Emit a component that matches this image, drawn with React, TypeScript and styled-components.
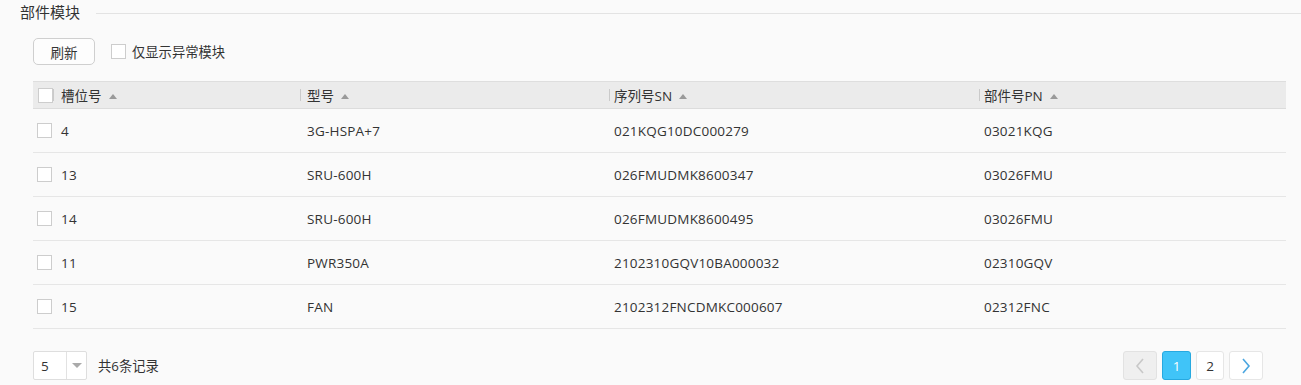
import React from 'react';
import styled, { createGlobalStyle } from 'styled-components';

const GlobalStyle = createGlobalStyle`
  html, body {
    margin: 0;
    padding: 0;
    background: #fafafa;
  }
  body {
    font-family: "Open Sans", "Noto Sans CJK SC", sans-serif;
    font-size: 13px;
    color: #333;
  }
`;

const FONT = `"Open Sans", "Noto Sans CJK SC", sans-serif`;

const Panel = styled.div`
  width: 1301px;
  height: 385px;
  overflow: hidden;
  box-sizing: border-box;
`;

const Legend = styled.div`
  display: flex;
  align-items: center;
  gap: 16px;
  padding-left: 20px;
  height: 24px;
`;

const LegendTitle = styled.span`
  font-size: 15px;
  color: #333;
  line-height: 24px;
`;

const LegendLine = styled.div`
  flex: 1;
  height: 1px;
  background: #e3e3e3;
  margin-top: 2px;
`;

const Body = styled.div`
  padding: 0 15px 0 33px;
`;

const Toolbar = styled.div`
  display: flex;
  align-items: center;
  gap: 16px;
  margin-top: 14px;
  height: 27px;
`;

const Button = styled.button`
  width: 62px;
  height: 27px;
  border: 1px solid #cfcfcf;
  border-radius: 5px;
  background: #fdfdfd;
  font-family: ${FONT};
  font-size: 13.5px;
  color: #333;
  padding: 0;
  box-sizing: border-box;
`;

const CheckLabel = styled.label`
  display: flex;
  align-items: center;
  gap: 6px;
  font-size: 13.3px;
  color: #333;
`;

const Box = styled.span<{ $size?: number }>`
  display: inline-block;
  width: ${(p) => p.$size ?? 14}px;
  height: ${(p) => p.$size ?? 14}px;
  border: 1px solid #cdcdcd;
  background: #fff;
  box-sizing: border-box;
  flex: none;
`;

const Table = styled.table`
  width: 1253px;
  margin-top: 16px;
  border-collapse: collapse;
  table-layout: fixed;
  font-size: 13.5px;
`;

const HeadRow = styled.tr`
  background: #ebebeb;
  height: 27px;
  border-top: 1px solid #dedede;
  border-bottom: 1px solid #dcdcdc;
`;

const Th = styled.th<{ $sep?: boolean; $pad?: number }>`
  text-align: left;
  font-weight: normal;
  color: #333;
  padding: 0 0 0 ${(p) => p.$pad ?? 6}px;
  position: relative;
  white-space: nowrap;

  &::before {
    content: '';
    display: ${(p) => (p.$sep ? 'block' : 'none')};
    position: absolute;
    left: 0;
    top: 7px;
    bottom: 7px;
    width: 1px;
    background: #cacaca;
  }
`;

const Arrow = styled.span`
  display: inline-block;
  margin-left: 7px;
  width: 0;
  height: 0;
  border-left: 4px solid transparent;
  border-right: 4px solid transparent;
  border-bottom: 5px solid #9a9a9a;
  vertical-align: 2px;
`;

const Row = styled.tr`
  height: 44px;
  border-bottom: 1px solid #e6e6e6;
`;

const Td = styled.td<{ $pad?: number }>`
  padding: 0 0 0 ${(p) => p.$pad ?? 6}px;
  color: #333;
  white-space: nowrap;
  letter-spacing: 0.2px;
`;

const CheckCell = styled.td`
  padding: 0 0 0 4px;
  line-height: 0;
`;

const CheckHead = styled.th`
  padding: 0 0 0 4px;
  line-height: 0;
`;

const Footer = styled.div`
  display: flex;
  align-items: center;
  justify-content: space-between;
  margin-top: 22px;
  width: 1253px;
`;

const PageSize = styled.div`
  display: flex;
  align-items: center;
  gap: 11px;
  font-size: 13.3px;
`;

const Select = styled.div`
  display: flex;
  width: 54px;
  height: 29px;
  border: 1px solid #dedede;
  border-radius: 2px;
  background: #fff;
  box-sizing: border-box;
`;

const SelectValue = styled.span`
  width: 25px;
  padding-left: 7px;
  display: flex;
  align-items: center;
  border-right: 1px solid #e2e2e2;
  font-size: 13.5px;
`;

const Caret = styled.span`
  flex: 1;
  display: flex;
  align-items: center;
  justify-content: center;

  &::after {
    content: '';
    border-left: 5px solid transparent;
    border-right: 5px solid transparent;
    border-top: 5px solid #aaa;
  }
`;

const Pager = styled.div`
  display: flex;
  gap: 5px;
  margin-right: 23px;
`;

const PageBtn = styled.div<{ $active?: boolean; $disabled?: boolean; $w?: number }>`
  width: ${(p) => p.$w ?? 29}px;
  height: 29px;
  box-sizing: border-box;
  display: flex;
  align-items: center;
  justify-content: center;
  border-radius: 3px;
  font-size: 13.5px;
  border: 1px solid
    ${(p) => (p.$active ? '#27a9e0' : p.$disabled ? '#e2e2e2' : '#e6e6e6')};
  background: ${(p) => (p.$active ? '#40c4f8' : p.$disabled ? '#efefef' : '#fff')};
  color: ${(p) => (p.$active ? '#fff' : '#333')};
`;

const Chevron = ({ dir, color }: { dir: 'left' | 'right'; color: string }) => (
  <svg width="10" height="16" viewBox="0 0 10 16">
    <path
      d={dir === 'left' ? 'M8 1 L2 8 L8 15' : 'M2 1 L8 8 L2 15'}
      fill="none"
      stroke={color}
      strokeWidth="1.6"
    />
  </svg>
);

const rows = [
  ['4', '3G-HSPA+7', '021KQG10DC000279', '03021KQG'],
  ['13', 'SRU-600H', '026FMUDMK8600347', '03026FMU'],
  ['14', 'SRU-600H', '026FMUDMK8600495', '03026FMU'],
  ['11', 'PWR350A', '2102310GQV10BA000032', '02310GQV'],
  ['15', 'FAN', '2102312FNCDMKC000607', '02312FNC'],
];

const headers = ['槽位号', '型号', '序列号SN', '部件号PN'];
const pads = [8, 7, 5, 5];

export default function App() {
  return (
    <Panel>
      <GlobalStyle />
      <Legend>
        <LegendTitle>部件模块</LegendTitle>
        <LegendLine />
      </Legend>
      <Body>
        <Toolbar>
          <Button>刷新</Button>
          <CheckLabel>
            <Box $size={15} />
            仅显示异常模块
          </CheckLabel>
        </Toolbar>
        <Table>
          <colgroup>
            <col style={{ width: 20 }} />
            <col style={{ width: 247 }} />
            <col style={{ width: 309 }} />
            <col style={{ width: 370 }} />
            <col style={{ width: 307 }} />
          </colgroup>
          <thead>
            <HeadRow>
              <CheckHead>
                <Box $size={15} />
              </CheckHead>
              {headers.map((h, i) => (
                <Th key={h} $sep $pad={pads[i]}>
                  {h}
                  <Arrow />
                </Th>
              ))}
            </HeadRow>
          </thead>
          <tbody>
            {rows.map((r, index) => (
              <Row key={index}>
                <CheckCell>
                  <Box $size={15} />
                </CheckCell>
                {r.map((c, i) => (
                  <Td key={i} $pad={pads[i]}>
                    {c}
                  </Td>
                ))}
              </Row>
            ))}
          </tbody>
        </Table>
        <Footer>
          <PageSize>
            <Select>
              <SelectValue>5</SelectValue>
              <Caret />
            </Select>
            <span>共6条记录</span>
          </PageSize>
          <Pager>
            <PageBtn $disabled $w={34}>
              <Chevron dir="left" color="#c8c8c8" />
            </PageBtn>
            <PageBtn $active>1</PageBtn>
            <PageBtn $w={28}>2</PageBtn>
            <PageBtn $w={34}>
              <Chevron dir="right" color="#4ba6e0" />
            </PageBtn>
          </Pager>
        </Footer>
      </Body>
    </Panel>
  );
}
